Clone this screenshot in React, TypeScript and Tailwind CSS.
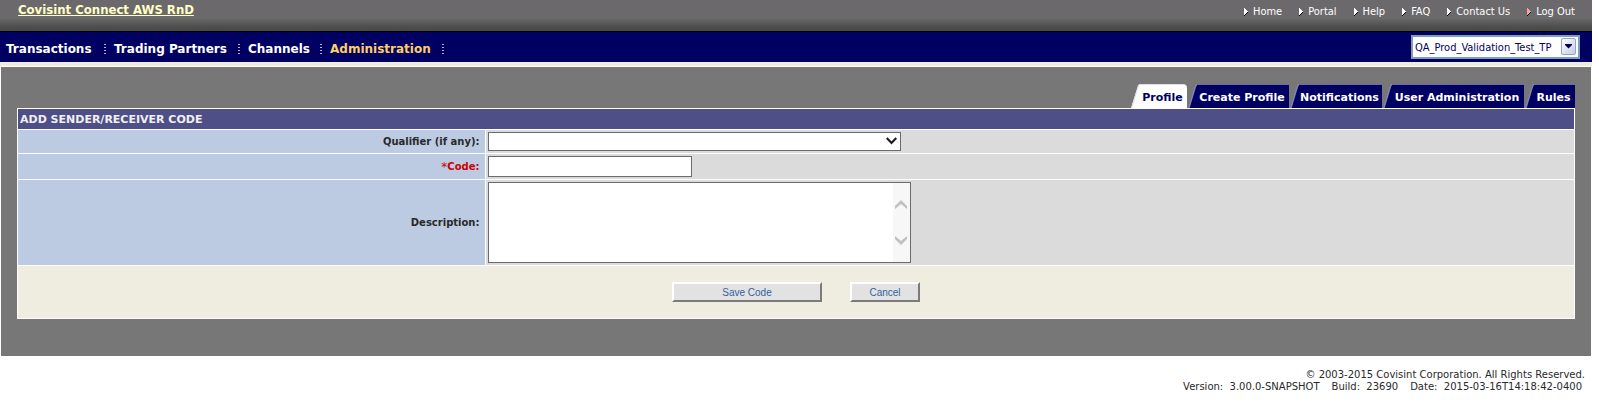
import React from "react";

const menu = [
  { label: "Transactions", width: "w-[108px]" },
  { label: "Trading Partners", width: "w-[134px]" },
  { label: "Channels", width: "w-[82px]" },
  { label: "Administration", width: "w-[122px]", active: true },
];

const links = [
  { label: "Home", color: "#ffffff" },
  { label: "Portal", color: "#ffffff" },
  { label: "Help", color: "#ffffff" },
  { label: "FAQ", color: "#ffffff" },
  { label: "Contact Us", color: "#ffffff" },
  { label: "Log Out", color: "#ff9c9c" },
];

const tabs = [
  { label: "Profile", width: "w-[56px]", active: true },
  { label: "Create Profile", width: "w-[101px]" },
  { label: "Notifications", width: "w-[92px]" },
  { label: "User Administration", width: "w-[141px]" },
  { label: "Rules", width: "w-[50px]" },
];

const tahoma = "font-['Tahoma','DejaVu_Sans_Condensed','DejaVu_Sans',sans-serif]";

function LinkArrow({ color }: { color: string }) {
  return (
    <svg width="5" height="8" viewBox="0 0 5 8" shapeRendering="crispEdges" aria-hidden="true">
      <path d="M0 7h1v1H0zM1 6h1v1H1zM2 5h1v1H2zM3 4h1v1H3z" fill="#000" />
      <path d="M0 0h1v7H0zM1 1h1v5H1zM2 2h1v3H2zM3 3h1v1H3z" fill={color} />
    </svg>
  );
}

function Dots() {
  return (
    <svg width="2" height="11" viewBox="0 0 2 11" shapeRendering="crispEdges" aria-hidden="true">
      <path d="M0 0h2v1H0zM0 3h2v1H0zM0 6h2v1H0zM0 9h2v1H0z" fill="#b5b5c6" />
    </svg>
  );
}

function TabSlant({ active }: { active?: boolean }) {
  return (
    <svg width="9" height="24" viewBox="0 0 9 24" className="shrink-0" aria-hidden="true">
      <path d="M0 24L7 1.5Q7.500 0 9 0V24Z" fill={active ? "#ffffff" : "#000063"} />
      <path
        d="M0.700 24L7.500 1.800Q8 0.500 9 0.500"
        fill="none"
        stroke={active ? "#e0e0e0" : "#8484b0"}
        strokeWidth={active ? 1 : 1.8}
      />
    </svg>
  );
}

export default function App() {
  return (
    <div className="bg-white pr-[7px] font-['Verdana','DejaVu_Sans',sans-serif] text-[10px] leading-3 text-[#292929]">
      <header>
        <div
          className={`flex h-8 items-start justify-between border-b border-black bg-[linear-gradient(#6b696b_0,#6b696b_18px,#4a4a4a_28px,#4a4a4a_100%)] pl-[18px] pr-[17px] ${tahoma}`}
        >
          <a href="#" className="text-[13px] font-bold leading-5 text-[#ffffc6] underline">
            Covisint Connect AWS RnD
          </a>
          <nav className="flex gap-[17px] pt-1 text-[11px] leading-4 text-white">
            {links.map((l) => (
              <a key={l.label} href="#" className="flex items-center gap-1 whitespace-nowrap">
                <LinkArrow color={l.color} />
                {l.label}
              </a>
            ))}
          </nav>
        </div>
        <div className="flex h-[30px] items-center justify-between bg-[#000063] pl-[6px] pr-3">
          <nav className="flex pt-1 text-[12px] font-bold leading-4">
            {menu.map((m) => (
              <div key={m.label} className={`flex items-center justify-between pr-2 ${m.width}`}>
                <a href="#" className={`whitespace-nowrap ${m.active ? "text-[#ffce63]" : "text-white"}`}>
                  {m.label}
                </a>
                <Dots />
              </div>
            ))}
          </nav>
          <div className="relative w-[169px]">
            <select
              aria-label="Trading partner"
              className={`block h-6 w-full appearance-none border-2 border-[#7b9ebd] bg-white pl-[2px] pt-[2px] text-[11px] text-[#000063] ${tahoma}`}
            >
              <option>QA_Prod_Validation_Test_TP</option>
            </select>
            <svg
              width="15"
              height="17"
              viewBox="0 0 15 17"
              className="pointer-events-none absolute right-1 top-[3px]"
              aria-hidden="true"
            >
              <defs>
                <linearGradient id="combo" x1="0" y1="0" x2="1" y2="1">
                  <stop offset="0" stopColor="#ffffff" />
                  <stop offset="1" stopColor="#c2cbe0" />
                </linearGradient>
              </defs>
              <rect x="0.500" y="0.500" width="14" height="16" rx="1.500" fill="url(#combo)" stroke="#94a6c6" />
              <path d="M4 6h7v1L7.500 10.500L4 7Z" fill="#000063" />
            </svg>
          </div>
        </div>
        <div className="h-1 bg-[#efebde]" />
      </header>

      <main className="ml-px mr-px mt-px bg-[#777777] px-4 pb-[37px] pt-[17px]">
        <nav className="flex justify-end gap-px">
          {tabs.map((t) => (
            <a key={t.label} href="#" className={`flex h-6 text-[11px] font-bold ${t.width}`}>
              <TabSlant active={t.active} />
              <span
                className={`flex flex-1 items-center justify-center whitespace-nowrap border-t pr-[2px] pt-[2px] ${
                  t.active
                    ? "rounded-tr-sm border-[#e0e0e0] bg-white text-[#000063]"
                    : "border-[#6b6ba5] bg-[#000063] text-white"
                }`}
              >
                {t.label}
              </span>
            </a>
          ))}
        </nav>

        <form onSubmit={(e) => e.preventDefault()} className="border border-white bg-white">
          <h1 className="h-5 bg-[#4f4f87] pl-[2px] text-[11px] font-bold leading-[22px] text-[#f0f0f0]">
            ADD SENDER/RECEIVER CODE
          </h1>
          <div className="mt-px grid grid-cols-[3fr_7fr] gap-px font-bold">
            <label htmlFor="qualifier" className="flex items-center justify-end bg-[#bdcbe2] pr-[5px]">
              Qualifier (if any):
            </label>
            <div className="bg-[#dbdbdb] p-[2px]">
              <div className="relative w-[413px]">
                <select
                  id="qualifier"
                  className="block h-[19px] w-full appearance-none border border-[#6b6b6b] bg-white font-normal"
                >
                  <option></option>
                </select>
                <svg
                  width="11"
                  height="8"
                  viewBox="0 0 11 8"
                  className="pointer-events-none absolute right-1 top-[5px]"
                  aria-hidden="true"
                >
                  <path d="M0.700 1L5.500 6L10.300 1" fill="none" stroke="#1a1a1a" strokeWidth="2.200" />
                </svg>
              </div>
            </div>

            <label htmlFor="code" className="flex items-center justify-end bg-[#bdcbe2] pr-[5px] text-[#ce0000]">
              <span className="text-[12px] font-normal">*</span>Code:
            </label>
            <div className="bg-[#dbdbdb] p-[2px]">
              <input id="code" type="text" className="block h-[21px] w-[204px] border border-[#6b6b6b] bg-white px-1 font-normal" />
            </div>

            <label htmlFor="description" className="flex items-center justify-end bg-[#bdcbe2] pr-[5px]">
              Description:
            </label>
            <div className="bg-[#dbdbdb] p-[2px]">
              <div className="flex h-[81px] w-[423px] border border-[#6b6b6b] bg-white">
                <textarea id="description" className="block flex-1 resize-none overflow-hidden p-1 font-normal" />
                <div className="flex w-[17px] flex-col items-center justify-center gap-[27px] bg-[#f7f7f7]">
                  <svg width="12" height="9" viewBox="0 0 12 9" aria-hidden="true">
                    <path d="M0 6L6 0L12 6V9L6 4L0 9Z" fill="#c0c0c0" />
                  </svg>
                  <svg width="12" height="9" viewBox="0 0 12 9" aria-hidden="true">
                    <path d="M0 0L6 5L12 0V3L6 9L0 3Z" fill="#c0c0c0" />
                  </svg>
                </div>
              </div>
            </div>
          </div>
          <div className="mt-px flex h-[52px] items-start justify-center gap-7 bg-[#efeddf] pt-4 font-['Liberation_Sans',sans-serif] text-[10px] text-[#31639c]">
            <button
              type="submit"
              className="h-5 w-[150px] border-2 border-b-[#7b7b7b] border-l-white border-r-[#7b7b7b] border-t-white bg-[#e2e2e2] pt-px"
            >
              Save Code
            </button>
            <button
              type="button"
              className="h-5 w-[70px] border-2 border-b-[#7b7b7b] border-l-white border-r-[#7b7b7b] border-t-white bg-[#e2e2e2] pt-px"
            >
              Cancel
            </button>
          </div>
        </form>
      </main>

      <footer className="pr-[7px] pt-[13px] text-right">
        <p>© 2003-2015 Covisint Corporation. All Rights Reserved.</p>
        <p className="flex justify-end gap-3 pr-[3px]">
          <span className="whitespace-pre">Version:  3.00.0-SNAPSHOT</span>
          <span className="whitespace-pre">Build:  23690</span>
          <span className="whitespace-pre">Date:  2015-03-16T14:18:42-0400</span>
        </p>
      </footer>
    </div>
  );
}
